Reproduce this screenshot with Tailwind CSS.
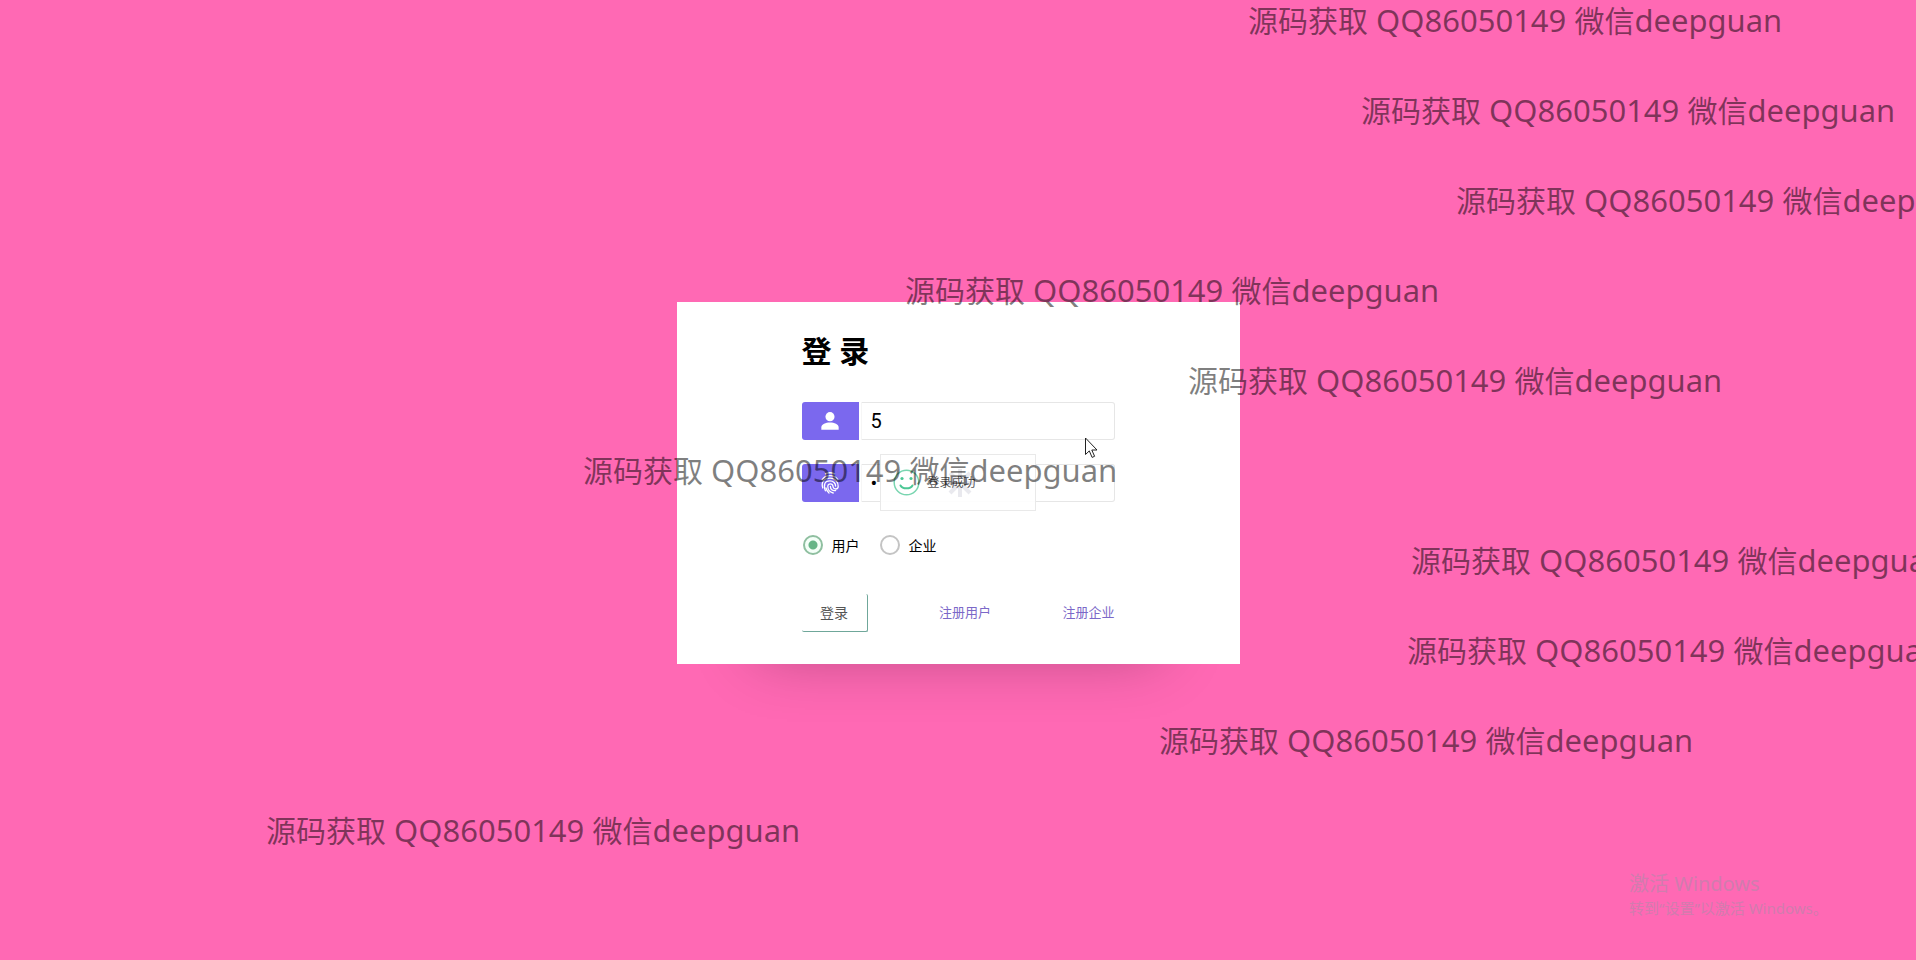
<!DOCTYPE html>
<html lang="zh">
<head>
<meta charset="utf-8">
<meta name="viewport" content="width=device-width, initial-scale=1">
<title>登录</title>
<script src="https://cdn.jsdelivr.net/npm/@tailwindcss/browser@4"></script>
</head>
<body class="relative min-h-screen overflow-hidden bg-[#ff69b4] font-['Noto_Sans','Noto_Sans_CJK_SC',sans-serif]">

<main class="flex min-h-screen items-center justify-center pt-[6px]">
  <form class="w-full max-w-[563px] bg-white px-[125px] pt-[27px] pb-8 shadow-[0_70px_60px_-80px_rgba(0,0,0,0.3)]">
    <h1 class="text-[30px] leading-[44px] font-bold text-black">登 录</h1>

    <div class="mt-[29px] flex h-[38px] gap-[2px]">
      <label for="account" class="flex w-[57px] shrink-0 items-center justify-center rounded-l-[3px] bg-[#7b68ee] text-white">
        <svg class="size-[26px]" viewBox="0 0 24 24" fill="currentColor" role="img" aria-label="账号"><circle cx="12" cy="8" r="4.2"/><path d="M4 20v-2C4 14.800 8 13.400 12 13.400s8 1.400 8 4.600v2z"/></svg>
      </label>
      <input id="account" type="text" value="5" class="w-full min-w-0 rounded-r-[3px] border border-[#e6e6e6] border-l-[#f6f6f6] pl-[9px] font-[Roboto] text-[20px] text-black outline-none">
    </div>

    <div class="relative mt-6 flex h-[38px] gap-[2px]">
      <label for="password" class="flex w-[57px] shrink-0 items-center justify-center rounded-l-[3px] bg-[#7b68ee] text-white">
        <svg class="h-[22px] w-[18px]" viewBox="0 0 18 22" fill="none" stroke="currentColor" stroke-width="1.3" stroke-linecap="round" role="img" aria-label="密码">
          <path d="M4.500 1.800Q9-.3 13.500 1.800"/>
          <path d="M1.200 7.600C4.500 2.300 13.500 2.300 16.800 7.600"/>
          <path d="M1.800 16C-.2 9.800 3 6.200 9 6.200s8.200 4.300 8.200 8.300c0 3.300-4.700 3.300-5.200 0-.3-3.600-5.200-3.600-5.200 0 0 3.500 2.200 5.600 5.400 6.500"/>
          <path d="M4.400 18.800C2.300 13 3.500 8.800 9 8.800c3.500 0 5.600 2.600 5.600 5.200"/>
          <path d="M9.400 14.400c0 2.800 2 4.600 5.200 4.100M8 21c-1.600-1.400-2.600-3.200-3-5"/>
        </svg>
      </label>
      <input id="password" type="password" value="5" class="w-full min-w-0 rounded-r-[3px] border border-[#e6e6e6] border-l-[#f6f6f6] pl-[9px] font-[Roboto] text-[20px] text-black outline-none">

      <!-- Toast message, half faded in -->
      <div role="status" class="absolute -top-[10px] left-[78px] flex h-[57px] w-[156px] items-center border border-[#e9e9e9] bg-white/90 pl-3">
        <svg class="size-[27px] text-[#4cc795]" viewBox="0 0 27 27" fill="none" stroke="currentColor" stroke-width="1.5" stroke-linecap="round" aria-hidden="true">
          <circle cx="13.500" cy="13.500" r="12.300" opacity=".75"/>
          <path d="M7.500 16.500c2 3.800 10 3.800 12 0" stroke-width="2"/>
          <circle cx="9" cy="9.500" r="1.600" fill="currentColor" stroke="none"/><circle cx="18" cy="9.500" r="1.600" fill="currentColor" stroke="none"/>
        </svg>
        <span class="ml-2 text-[12px] text-[#555]">登录成功</span>
        <svg class="absolute top-3 left-[63px] size-8 text-[#6a6a90]/15" viewBox="0 0 32 32" fill="none" stroke="currentColor" stroke-width="4" aria-hidden="true"><path d="M16 2v10M16 20v10M2 16h10M20 16h10M6 6l7 7M19 19l7 7M26 6l-7 7M13 19l-7 7"/></svg>
      </div>
      <!-- Mouse pointer -->
      <svg class="absolute -top-[27px] left-[283px] h-[22px] w-[13px]" viewBox="0 0 13 22" fill="#fff" stroke="#222" stroke-width="1" aria-hidden="true"><path d="M.5 1v16.500l3.800-3.600 2.800 6.500 2.500-1.100-2.800-6.300h5.200z"/></svg>
    </div>

    <div class="mt-8 flex h-[22px] items-center gap-5 text-[14px] text-black">
      <label class="flex items-center gap-[9px]"><input type="radio" name="role" checked class="ml-px size-5 appearance-none rounded-full border-2 border-[#8fbfa0] bg-[#f4fff8] bg-[radial-gradient(circle,#67b587_4px,transparent_5px)]">用户</label>
      <label class="flex items-center gap-[9px]"><input type="radio" name="role" class="size-5 appearance-none rounded-full border-2 border-[#c4c4c4] bg-white">企业</label>
    </div>

    <div class="mt-[38px] flex items-center justify-between text-[13px]">
      <button type="submit" class="h-[38px] w-[66px] rounded-[2px] border-r border-b border-[#6fa79a] text-[14px] text-[#555]">登录</button>
      <a href="#" class="text-[#7b68c8]">注册用户</a>
      <a href="#" class="text-[#7b68c8]">注册企业</a>
    </div>
  </form>
</main>

<!-- Floating watermark lines, each at its own place across the screen -->
<div class="pointer-events-none absolute inset-0 overflow-hidden text-[31px] leading-[90px] whitespace-nowrap text-black/50">
  <p class="-mt-[25px] ml-[1248px] h-[90px]"><span class="text-[30px]">源码获取</span> QQ86050149 <span class="text-[30px]">微信</span>deepguan</p>
  <p class="ml-[1361px] h-[90px]"><span class="text-[30px]">源码获取</span> QQ86050149 <span class="text-[30px]">微信</span>deepguan</p>
  <p class="ml-[1456px] h-[90px]"><span class="text-[30px]">源码获取</span> QQ86050149 <span class="text-[30px]">微信</span>deepguan</p>
  <p class="ml-[905px] h-[90px]"><span class="text-[30px]">源码获取</span> QQ86050149 <span class="text-[30px]">微信</span>deepguan</p>
  <p class="ml-[1188px] h-[90px]"><span class="text-[30px]">源码获取</span> QQ86050149 <span class="text-[30px]">微信</span>deepguan</p>
  <p class="ml-[583px] h-[90px]"><span class="text-[30px]">源码获取</span> QQ86050149 <span class="text-[30px]">微信</span>deepguan</p>
  <p class="ml-[1411px] h-[90px]"><span class="text-[30px]">源码获取</span> QQ86050149 <span class="text-[30px]">微信</span>deepguan</p>
  <p class="ml-[1407px] h-[90px]"><span class="text-[30px]">源码获取</span> QQ86050149 <span class="text-[30px]">微信</span>deepguan</p>
  <p class="ml-[1159px] h-[90px]"><span class="text-[30px]">源码获取</span> QQ86050149 <span class="text-[30px]">微信</span>deepguan</p>
  <p class="ml-[266px] h-[90px]"><span class="text-[30px]">源码获取</span> QQ86050149 <span class="text-[30px]">微信</span>deepguan</p>
</div>

<!-- System activation notice -->
<div class="pointer-events-none absolute right-[92px] bottom-[42px] w-[195px] whitespace-nowrap text-[#d17cae]">
  <p class="text-[20px] leading-7">激活 Windows</p>
  <p class="text-[15px] leading-5">转到“设置”以激活 Windows。</p>
</div>
</body>
</html>
